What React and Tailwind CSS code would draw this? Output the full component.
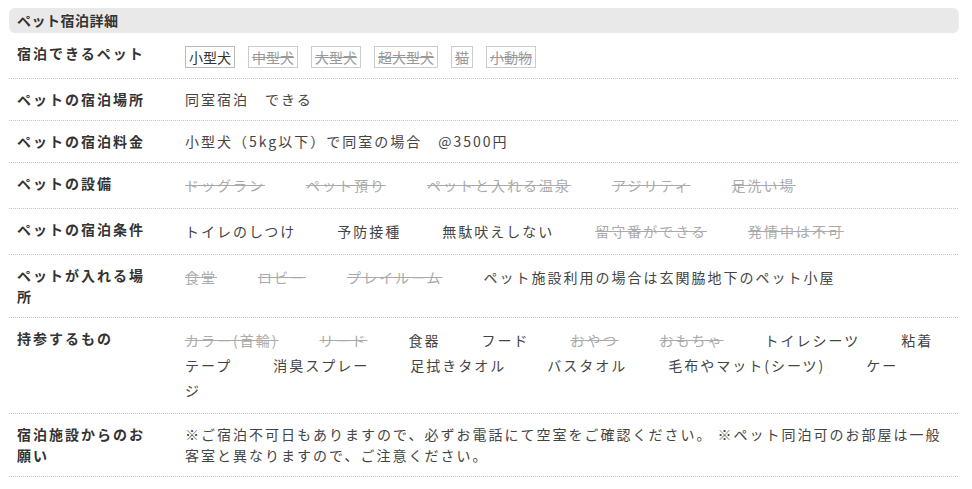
const FONT = { fontFamily: '"Noto Sans CJK JP", "Noto Sans", sans-serif' };

const petTags = [
  { label: "小型犬", ok: true },
  { label: "中型犬", ok: false },
  { label: "大型犬", ok: false },
  { label: "超大型犬", ok: false },
  { label: "猫", ok: false },
  { label: "小動物", ok: false },
];

// "|" marks chunks that must not be split across lines
const rows = [
  { label: "ペットの宿泊場所", text: "同室宿泊　できる" },
  { label: "ペットの宿泊料金", text: "小型犬（5kg以下）で同室の場合　@3500円" },
  {
    label: "ペットの設備",
    items: [
      ["ドッグラン", false],
      ["ペット預り", false],
      ["ペットと入れる温泉", false],
      ["アジリティ", false],
      ["足洗い場", false],
    ],
  },
  {
    label: "ペットの宿泊条件",
    items: [
      ["トイレのしつけ", true],
      ["予防接種", true],
      ["無駄吠えしない", true],
      ["留守番ができる", false],
      ["発情中は不可", false],
    ],
  },
  {
    label: "ペットが入れる場所",
    items: [
      ["食堂", false],
      ["ロビー", false],
      ["プレイルーム", false],
      ["ペット施設利用の場合は玄関脇地下のペット小屋", true],
    ],
  },
  {
    label: "持参するもの",
    items: [
      ["カラー(首輪)", false],
      ["リード", false],
      ["食器", true],
      ["フード", true],
      ["おやつ", false],
      ["おもちゃ", false],
      ["トイレシーツ", true],
      ["粘着|テープ", true],
      ["消臭スプレー", true],
      ["足拭きタオル", true],
      ["バスタオル", true],
      ["毛布やマット(シーツ)", true],
      ["ケージ", true],
    ],
  },
  {
    label: "宿泊施設からのお願い",
    text: "※ご宿泊不可日もありますので、必ずお電話にて空室をご確認ください。 ※ペット同泊可のお部屋は一般客室と異なりますので、ご注意ください。",
  },
];

function Row({ label, children }) {
  return (
    <div className="flex border-b border-dotted border-[#c4c4c4] pt-[10px] pb-[10px]">
      <div className="w-[176px] shrink-0 pl-2 pr-[32px] text-[14px] font-bold leading-[21px] tracking-[2px] text-[#333]">
        {label}
      </div>
      <div className="flex-1 pr-2 text-[14px] tracking-[2px] text-[#444]">{children}</div>
    </div>
  );
}

export default function App() {
  return (
    <div className="bg-white w-[972px] h-[489px] pt-[8px]" style={FONT}>
      <div className="ml-[9px] w-[949px]">
        <div className="h-[25px] rounded-md bg-[#e9e9e9] pl-[8px] text-[14px] font-bold leading-[25px] tracking-[0.5px] text-[#333] shadow-[1px_0_1px_rgba(0,0,0,0.08)]">
          ペット宿泊詳細
        </div>

        <Row label="宿泊できるペット">
          <div className="leading-[24px] tracking-normal">
            {petTags.map(t => (
              <span
                key={t.label}
                className={
                  "inline-block border px-[3px] leading-[20px] mr-[13px] align-middle " +
                  (t.ok
                    ? "border-[#bbb] text-[#333]"
                    : "border-[#ccc] text-[#999] line-through")
                }
              >
                {t.label}
              </span>
            ))}
          </div>
        </Row>

        {rows.map(r => (
          <Row key={r.label} label={r.label}>
            {r.text ? (
              <div className="leading-[21px]">{r.text}</div>
            ) : (
              <div className="leading-[25px]">
                {r.items.map(([name, ok]) => {
                  const [head, tail] = name.split("|");
                  return (
                    <span
                      key={name}
                      className={"mr-[41px] " + (ok ? "text-[#444]" : "text-[#aaa] line-through")}
                    >
                      {head}
                      {tail && <span className="whitespace-nowrap">{tail}</span>}
                    </span>
                  );
                })}
              </div>
            )}
          </Row>
        ))}
      </div>
    </div>
  );
}
